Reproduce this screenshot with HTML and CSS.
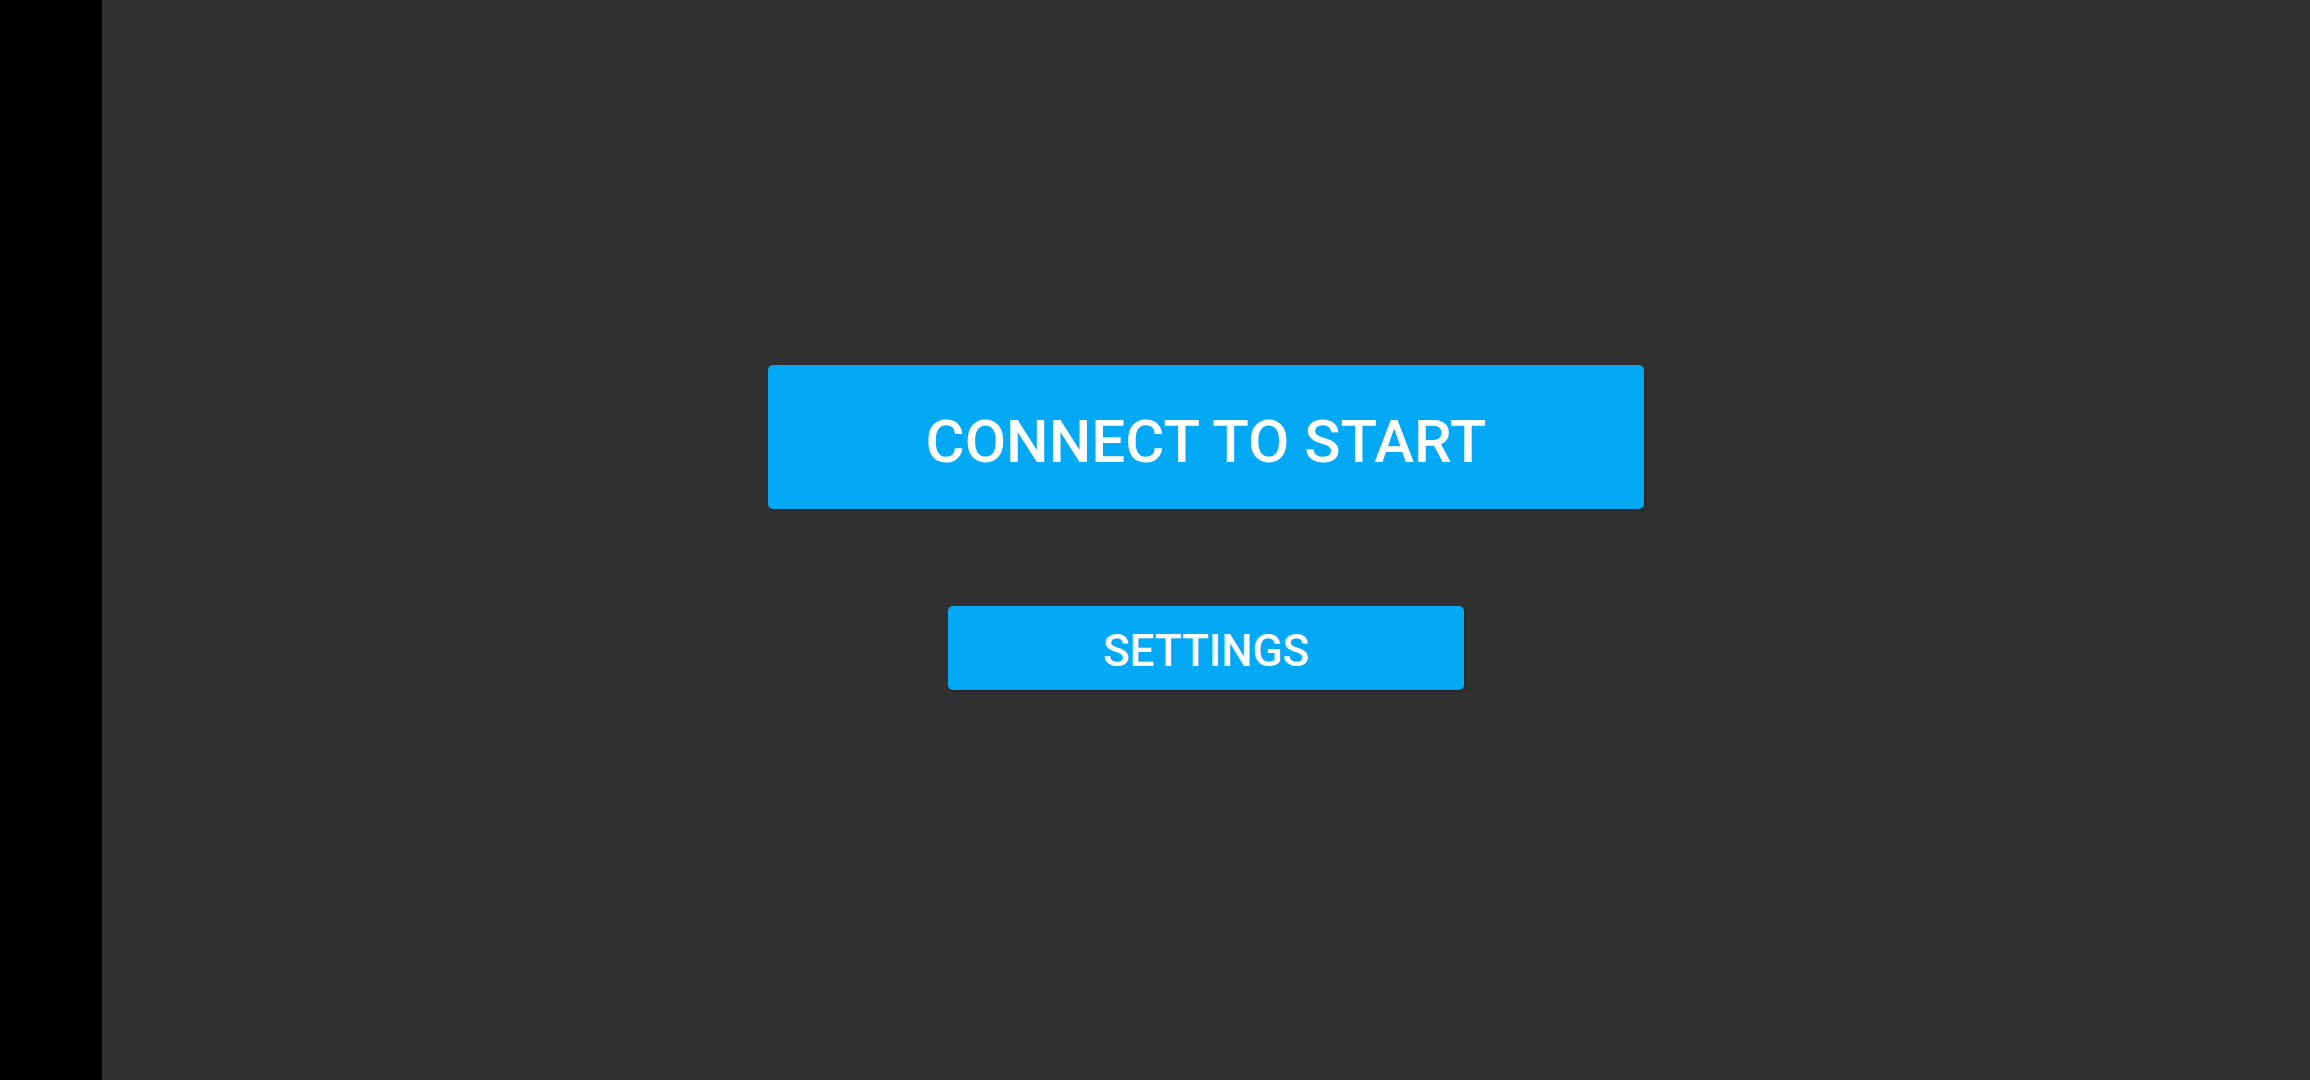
FILE: index.html
```html
<!DOCTYPE html>
<html>
<head>
<meta charset="utf-8">
<link rel="stylesheet" href="styles.css">
</head>
<body>
<div class="app">
  <div class="side"></div>
  <main class="main">
    <button class="btn btn-connect">CONNECT TO START</button>
    <button class="btn btn-settings">SETTINGS</button>
  </main>
</div>
</body>
</html>
```
FILE: styles.css
```css
html, body {
  margin: 0;
  padding: 0;
  width: 100%;
  height: 100%;
  overflow: hidden;
}
body {
  background: #303030;
  font-family: Roboto, "Liberation Sans", sans-serif;
}
.app {
  display: flex;
  width: 2310px;
  height: 1080px;
}
.side {
  width: 102px;
  flex: none;
  background: #000;
}
.main {
  flex: 1;
  display: flex;
  flex-direction: column;
  align-items: center;
  justify-content: center;
  gap: 97px;
  padding-bottom: 25px;
  box-sizing: border-box;
  background: #303030;
}
.btn {
  border: none;
  border-radius: 5px;
  background: #03a9f4;
  color: #fff;
  font-family: Roboto, "Liberation Sans", sans-serif;
  font-weight: 500;
  padding: 0;
  box-shadow: 1px 1px 2px rgba(0, 0, 0, 0.35);
  display: flex;
  align-items: center;
  justify-content: center;
  box-sizing: border-box;
}
.btn-connect {
  width: 876px;
  height: 144px;
  font-size: 60px;
  padding-top: 8px;
}
.btn-settings {
  width: 516px;
  height: 84px;
  font-size: 44px;
  padding-top: 5px;
}
```
